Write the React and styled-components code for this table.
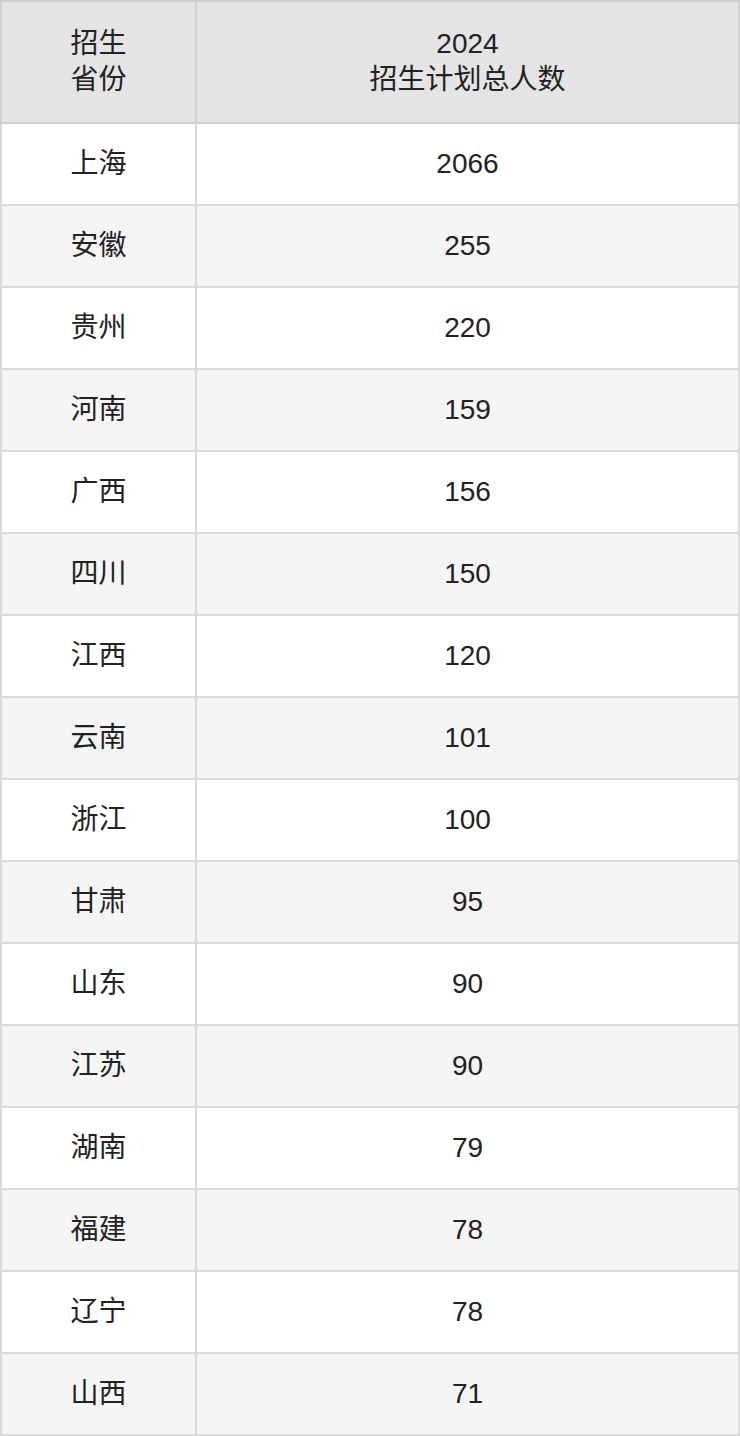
import React from 'react';
import styled, { createGlobalStyle } from 'styled-components';

const GlobalStyle = createGlobalStyle`
  html, body {
    margin: 0;
    padding: 0;
    background: #fff;
  }
  body {
    font-family: "Liberation Sans", "Noto Sans CJK SC", sans-serif;
  }
`;

const Table = styled.table`
  width: 740px;
  border-collapse: collapse;
  border: 2px solid #d9d9d9;
  color: #222;
  font-size: 28px;
  line-height: 36px;
  table-layout: fixed;
`;

const HeadCell = styled.th`
  height: 120px;
  padding: 0 10px;
  background: #e4e4e4;
  border: 2px solid #cfcfcf;
  font-weight: normal;
  text-align: center;
  width: ${(p) => (p.$narrow ? '173px' : 'auto')};
`;

const Row = styled.tr`
  background: ${(p) => (p.$striped ? '#f5f5f5' : '#fff')};
`;

const Cell = styled.td`
  height: 80px;
  padding: 0 10px;
  border: 2px solid #d9d9d9;
  text-align: center;
  vertical-align: middle;
`;

const rows = [
  ['上海', '2066'],
  ['安徽', '255'],
  ['贵州', '220'],
  ['河南', '159'],
  ['广西', '156'],
  ['四川', '150'],
  ['江西', '120'],
  ['云南', '101'],
  ['浙江', '100'],
  ['甘肃', '95'],
  ['山东', '90'],
  ['江苏', '90'],
  ['湖南', '79'],
  ['福建', '78'],
  ['辽宁', '78'],
  ['山西', '71'],
];

export default function App() {
  return (
    <>
      <GlobalStyle />
      <Table>
        <thead>
          <tr>
            <HeadCell $narrow>招生<br />省份</HeadCell>
            <HeadCell>2024<br />招生计划总人数</HeadCell>
          </tr>
        </thead>
        <tbody>
          {rows.map(([province, count], i) => (
            <Row key={province + i} $striped={i % 2 === 1}>
              <Cell>{province}</Cell>
              <Cell>{count}</Cell>
            </Row>
          ))}
        </tbody>
      </Table>
    </>
  );
}
